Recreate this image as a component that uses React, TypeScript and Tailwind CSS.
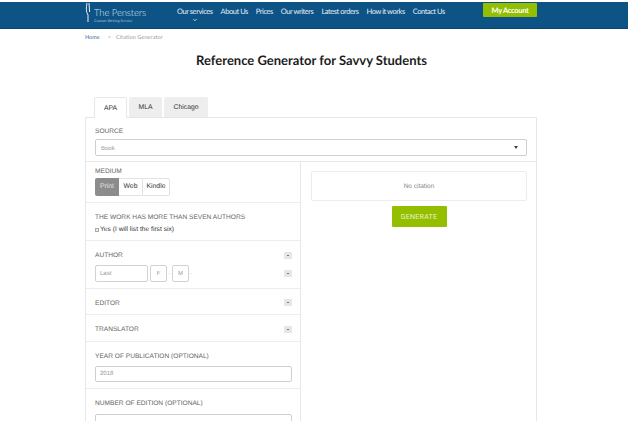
import { ChevronDown } from "lucide-react";

const navItems = ["About Us", "Prices", "Our writers", "Latest orders", "How it works", "Contact Us"];

function Label({ children }: { children: React.ReactNode }) {
  return <div className="h-[10px] pt-[1px] text-[6.6px] leading-[10px] text-[#666] font-['Liberation_Sans',sans-serif]">{children}</div>;
}

function MiniButton() {
  return (
    <div className="w-[8px] h-[7px] bg-[#e6e6e6] flex items-center justify-center">
      <div className="w-[2px] h-[1px] bg-[#777]" />
    </div>
  );
}

function Toggle({ label, height }: { label: string; height: string }) {
  return (
    <div className={`flex items-center justify-between ${height} pt-[2px] pl-[9px] pr-[8px] border-b border-[#ececec]`}>
      <Label>{label}</Label>
      <MiniButton />
    </div>
  );
}

export default function App() {
  return (
    <div className="w-[628px] h-[421px] overflow-hidden bg-white pt-[2px] font-['Lato',sans-serif] [text-rendering:geometricPrecision]">
      <header className="h-[27px] bg-[#0e5386] border-b border-[#0b446f] flex text-white">
        <div className="ml-[85px] w-[92px] flex items-center gap-[3px]">
          <svg width="6" height="20" viewBox="0 0 6 20" className="-mt-[4px]">
            <path d="M2 0 C1 5 1 9 3 12 L3 19" stroke="#e8f0f6" strokeWidth="1" fill="none" />
            <path d="M4 0 L4.6 9" stroke="#e8f0f6" strokeWidth="1" fill="none" />
          </svg>
          <div>
            <div className="text-[9.5px] leading-[11px] font-light text-[#dce8f1] tracking-[-0.1px]">The Pensters</div>
            <div className="text-[3.5px] leading-[4px] tracking-[0.1px] text-[#b8cfe0]">Custom Writing Service</div>
          </div>
        </div>
        <nav className="flex gap-[8px] text-[7.5px] pt-[5px] leading-[10px] tracking-[-0.45px] text-[#e6eef5]">
          <div className="flex flex-col items-center">
            <span>Our services</span>
            <ChevronDown size={6} strokeWidth={3} />
          </div>
          {navItems.map((item) => (
            <span key={item}>{item}</span>
          ))}
        </nav>
        <div className="ml-auto mr-[91px] mt-[1px] w-[54px] h-[14px] pt-[2px] bg-[#93bf00] rounded-[1px] text-[7.5px] tracking-[-0.3px] font-bold flex items-center justify-center">
          My Account
        </div>
      </header>

      <div className="ml-[85px] mt-[5px] text-[5.5px] leading-[8px] text-[#9a9a9a] flex">
        <span className="text-[#3d6f99]">Home</span>
        <span className="ml-[8px]">&gt;</span>
        <span className="ml-[5px] tracking-[0.1px]">Citation Generator</span>
      </div>

      <h1 className="mt-[8px] h-[20px] pr-[5px] text-center text-[13px] leading-[20px] font-bold text-[#1c1c1c]">
        Reference Generator for Savvy Students
      </h1>

      <main className="ml-[85px] w-[452px] mt-[27px] font-['Liberation_Sans',sans-serif]">
        <div className="flex gap-[2px] pl-[9px] text-[6.8px] text-[#333] h-[20px]">
          <div className="w-[33px] pt-[2px] bg-white border border-b-0 border-[#e6e6e6] rounded-t-[2px] flex items-center justify-center -mb-px z-10">APA</div>
          <div className="w-[33px] pt-[2px] bg-[#eeeeee] rounded-t-[2px] flex items-center justify-center">MLA</div>
          <div className="w-[44px] pt-[2px] bg-[#eeeeee] rounded-t-[2px] flex items-center justify-center">Chicago</div>
        </div>

        <div className="border border-[#e6e6e6] border-b-0">
          <div className="h-[44px] px-[9px] pt-[8px] border-b border-[#e8e8e8]">
            <Label>SOURCE</Label>
            <div className="mt-[3px] h-[17px] border border-[#cfcfcf] rounded-[2px] flex items-center justify-between pl-[5px] pr-[8px]">
              <span className="pt-[3px] text-[6px] text-[#999]">Book</span>
              <div className="w-0 h-0 border-x-[2.5px] border-x-transparent border-t-[3px] border-t-[#444]" />
            </div>
          </div>

          <div className="flex">
            <div className="w-[215px] border-r border-[#e8e8e8]">
              <div className="h-[41px] px-[9px] pt-[4px] border-b border-[#ececec]">
                <Label>MEDIUM</Label>
                <div className="flex mt-[2px] text-[6.8px] h-[18px] w-[75px]">
                  <div className="w-[24px] pt-[1px] bg-[#8c8c8c] text-[#e4e4e4] rounded-l-[2px] flex items-center justify-center">Print</div>
                  <div className="w-[23px] pt-[1px] border-y border-[#e2e2e2] flex items-center justify-center text-[#333]">Web</div>
                  <div className="w-[28px] pt-[1px] border border-[#e2e2e2] rounded-r-[2px] flex items-center justify-center text-[#333]">Kindle</div>
                </div>
              </div>

              <div className="h-[38px] px-[9px] pt-[9px] border-b border-[#ececec]">
                <Label>THE WORK HAS MORE THAN SEVEN AUTHORS</Label>
                <div className="flex items-center gap-[1px] mt-[3px] text-[6.7px] leading-[10px] text-[#333]">
                  <div className="w-[4px] h-[4px] border border-[#aaa] bg-[#eee]" />
                  <span>Yes (I will list the first six)</span>
                </div>
              </div>

              <div className="h-[48px] pl-[9px] pr-[8px] pt-[9px] border-b border-[#ececec]">
                <div className="flex items-center justify-between">
                  <Label>AUTHOR</Label>
                  <MiniButton />
                </div>
                <div className="flex items-center justify-between mt-[5px]">
                  <div className="flex items-center text-[6px] text-[#999]">
                    <div className="w-[53px] h-[17px] pt-[1px] border border-[#d2d2d2] rounded-[2px] flex items-center pl-[4px]">Last</div>
                    <div className="ml-[2px] w-[17px] h-[17px] pt-[1px] border border-[#d2d2d2] rounded-[2px] flex items-center justify-center">F</div>
                    <span className="w-[5px] text-center">.</span>
                    <div className="w-[17px] h-[17px] pt-[1px] border border-[#d2d2d2] rounded-[2px] flex items-center justify-center">M</div>
                    <span className="ml-[1px]">.</span>
                  </div>
                  <MiniButton />
                </div>
              </div>

              <Toggle label="EDITOR" height="h-[26px]" />
              <Toggle label="TRANSLATOR" height="h-[27px]" />

              <div className="h-[47px] pl-[9px] pr-[8px] pt-[9px] border-b border-[#ececec]">
                <Label>YEAR OF PUBLICATION (OPTIONAL)</Label>
                <div className="mt-[5px] h-[16px] pt-[1px] border border-[#cfcfcf] rounded-[2px] flex items-center pl-[4px] text-[6px] text-[#999]">2018</div>
              </div>

              <div className="h-[48px] pl-[9px] pr-[8px] pt-[9px]">
                <Label>NUMBER OF EDITION (OPTIONAL)</Label>
                <div className="mt-[6px] h-[16px] border border-[#cfcfcf] rounded-[2px]" />
              </div>
            </div>

            <div className="flex-1 pl-[10px] pr-[9px] pt-[9px]">
              <div className="h-[30px] pt-[1px] border border-[#ececec] rounded-[2px] flex items-center justify-center text-[6.5px] text-[#888]">
                No citation
              </div>
              <div className="mx-auto mt-[5px] w-[55px] h-[21px] pt-[1px] bg-[#93bf00] rounded-[1px] flex items-center justify-center text-[7px] tracking-[0.3px] text-[#e9f3c4] font-['Roboto',sans-serif]">
                GENERATE
              </div>
            </div>
          </div>
        </div>
      </main>
    </div>
  );
}
